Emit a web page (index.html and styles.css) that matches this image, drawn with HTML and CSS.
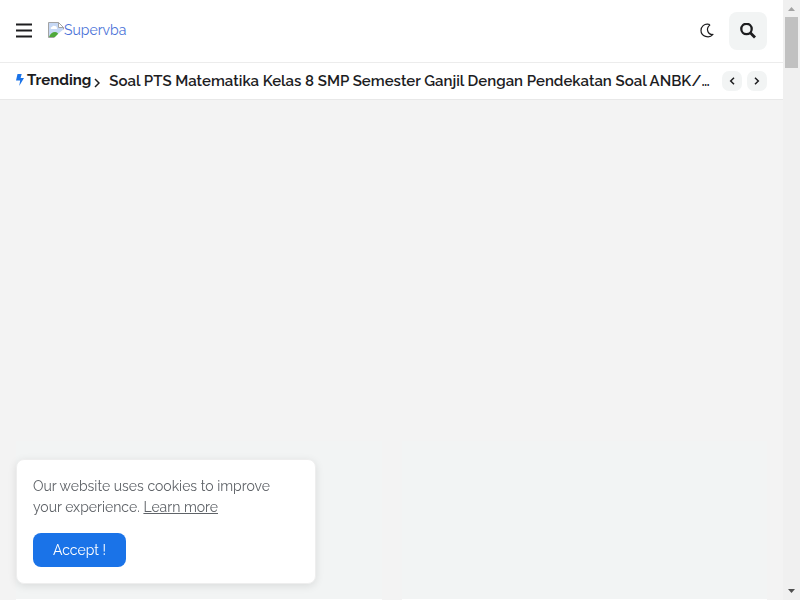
FILE: index.html
```html
<!DOCTYPE html>
<html lang="id">
<head>
    <meta charset="UTF-8">
    <meta name="viewport" content="width=device-width, initial-scale=1.0">
    <title>Supervba</title>
    <link rel="stylesheet" href="styles.css">
</head>
<body>
    <div class="page">
        <header class="header">
            <button class="icon-btn menu-btn" type="button" aria-label="Menu">
                <svg width="16" height="16" viewBox="0 0 16 16"><path d="M0 1.500h16M0 7.500h16M0 13.500h16" stroke="currentColor" stroke-width="2.200"/></svg>
            </button>
            <a class="logo" href="#">
                <svg width="16" height="16" viewBox="0 0 16 16">
                    <path d="M.5.5h10l5 5v10H.5z" fill="#c6d8f5" stroke="#a3a3a3"/>
                    <path d="M3 7q-1-2 1-2 1-2 3-1 2 0 2 3z" fill="#fff"/>
                    <path d="M1 15q2-5 6-5 3 0 5 5z" fill="#4fa83a"/>
                    <path d="M16 8v8H8z" fill="#fff"/>
                    <path d="M16 7v3l-7 6H6l5-5z" fill="#fff"/>
                    <path d="M10.500.5v5h5z" fill="#fff" stroke="#a3a3a3"/>
                </svg>
                <span>Supervba</span>
            </a>
            <button class="icon-btn dark-btn" type="button" aria-label="Dark mode">
                <svg width="14" height="16" viewBox="0 0 14 16"><path d="M8.200 1.200C4.300.6 1 3.600 1 7.500c0 5.800 8 8.500 12 3.900-4.800.8-7.800-5.600-3.200-9.300Q9 1.300 8.200 1.200Z" fill="none" stroke="currentColor" stroke-width="1.200" stroke-linejoin="round"/></svg>
            </button>
            <button class="icon-btn search-btn" type="button" aria-label="Search">
                <svg width="16" height="16" viewBox="0 0 16 16"><circle cx="6.500" cy="6" r="5.200" fill="none" stroke="currentColor" stroke-width="2.300"/><path d="M10.300 9.800l4.700 4.700" stroke="currentColor" stroke-width="2.800"/></svg>
            </button>
        </header>

        <section class="ticker">
            <h2 class="ticker-title">
                <svg class="bolt" width="8" height="14" viewBox="0 0 8 14"><path d="M1.500 1h4.200L4.600 5H8L3.200 13l1-5.500H0z" fill="currentColor"/></svg>
                <span>Trending</span>
                <svg class="chevron" width="6" height="10" viewBox="0 0 6 10"><path d="M1 1l4 4-4 4" fill="none" stroke="currentColor" stroke-width="1.500"/></svg>
            </h2>
            <a class="ticker-link" href="#">Soal PTS Matematika Kelas 8 SMP Semester Ganjil Dengan Pendekatan Soal ANBK/…</a>
            <nav class="ticker-nav">
                <button class="icon-btn" type="button" aria-label="Previous">
                    <svg width="6" height="8" viewBox="0 0 6 8"><path d="M5 .7L1.700 4 5 7.300" fill="none" stroke="currentColor" stroke-width="1.500"/></svg>
                </button>
                <button class="icon-btn" type="button" aria-label="Next">
                    <svg width="6" height="8" viewBox="0 0 6 8"><path d="M1 .7L4.300 4 1 7.300" fill="none" stroke="currentColor" stroke-width="1.500"/></svg>
                </button>
            </nav>
        </section>

        <main class="content">
            <article class="card"><div class="thumb"></div></article>
            <article class="card"><div class="thumb"></div></article>
        </main>
    </div>

    <div class="scrollbar">
        <svg width="17" height="17" viewBox="0 0 17 17"><path d="M5 11l3.500-4 3.500 4z" fill="#a3a3a3"/></svg>
        <div class="scroll-thumb"></div>
        <svg width="17" height="17" viewBox="0 0 17 17"><path d="M5 6h7l-3.500 4z" fill="#505050"/></svg>
    </div>

    <div class="cookie">
        <p>Our website uses cookies to improve your experience. <a href="#">Learn more</a></p>
        <button type="button">Accept !</button>
    </div>
</body>
</html>
```

FILE: styles.css
```css
* {
    box-sizing: border-box;
}

body {
    display: flex;
    height: 100vh;
    margin: 0;
    overflow: hidden;
    background: #f3f3f3;
    color: #1d1d1f;
    font-family: Raleway, Lato, sans-serif;
}

a {
    color: inherit;
    text-decoration: none;
}

svg {
    display: block;
    flex-shrink: 0;
}

.page {
    display: flex;
    flex-direction: column;
    flex: 1;
    min-width: 0;
}

.icon-btn {
    display: flex;
    align-items: center;
    justify-content: center;
    padding: 0;
    border: none;
    background: none;
    color: inherit;
    cursor: pointer;
}

/* Header */
.header {
    display: flex;
    align-items: center;
    flex-shrink: 0;
    height: 63px;
    padding: 0 16px;
    background: #fff;
    border-bottom: 1px solid #ececec;
}

.logo {
    display: flex;
    align-items: center;
    margin-left: 16px;
    padding-bottom: 2px;
    color: #4a72d8;
    font-size: 14px;
    line-height: 20px;
}

.dark-btn {
    margin-left: auto;
}

.search-btn {
    width: 38px;
    height: 38px;
    margin-left: 15px;
    border-radius: 8px;
    background: #f2f4f4;
}

/* Trending ticker */
.ticker {
    display: flex;
    align-items: center;
    flex-shrink: 0;
    height: 37px;
    padding: 0 16px;
    background: #fff;
    border-bottom: 1px solid #e8e8e8;
}

.ticker-title {
    display: flex;
    align-items: center;
    gap: 3px;
    margin: 0 9px 2px 0;
    font-size: 15px;
    line-height: 20px;
}

.bolt {
    color: #1a73e8;
}

.chevron {
    margin-top: 6px;
}

.ticker-link {
    flex: 1;
    min-width: 0;
    overflow: hidden;
    font-size: 15px;
    font-weight: 600;
    line-height: 20px;
    text-overflow: ellipsis;
    white-space: nowrap;
}

.ticker-nav {
    display: flex;
    gap: 5px;
    margin-left: 12px;
}

.ticker-nav button {
    width: 20px;
    height: 20px;
    border-radius: 7px;
    background: #f2f4f4;
}

/* Featured posts */
.content {
    display: grid;
    grid-template-columns: 1fr 1fr;
    gap: 20px;
    align-content: end;
    flex: 1;
    padding: 0 16px;
}

.card {
    padding-bottom: 1px;
    background: #fff;
}

.thumb {
    height: 158px;
    background: #f2f4f4;
}

/* Scrollbar */
.scrollbar {
    display: flex;
    flex-direction: column;
    justify-content: space-between;
    width: 17px;
    background: #f0f0f0;
}

.scroll-thumb {
    height: 51px;
    margin: 0 2px auto;
    background: #c1c1c1;
}

/* Cookie notice */
.cookie {
    position: fixed;
    bottom: 16px;
    left: 16px;
    width: 300px;
    padding: 16px;
    border: 1px solid #eee;
    border-radius: 8px;
    background: #fff;
    box-shadow: 0 2px 8px rgba(0, 0, 0, 0.1);
}

.cookie p {
    margin: 0 0 15px;
    color: #5f6368;
    font-size: 14px;
    line-height: 21px;
}

.cookie a {
    text-decoration: underline;
}

.cookie button {
    height: 34px;
    padding: 0 20px;
    border: none;
    border-radius: 8px;
    background: #1a73e8;
    color: #fff;
    font-family: inherit;
    font-size: 14px;
    cursor: pointer;
}
```
